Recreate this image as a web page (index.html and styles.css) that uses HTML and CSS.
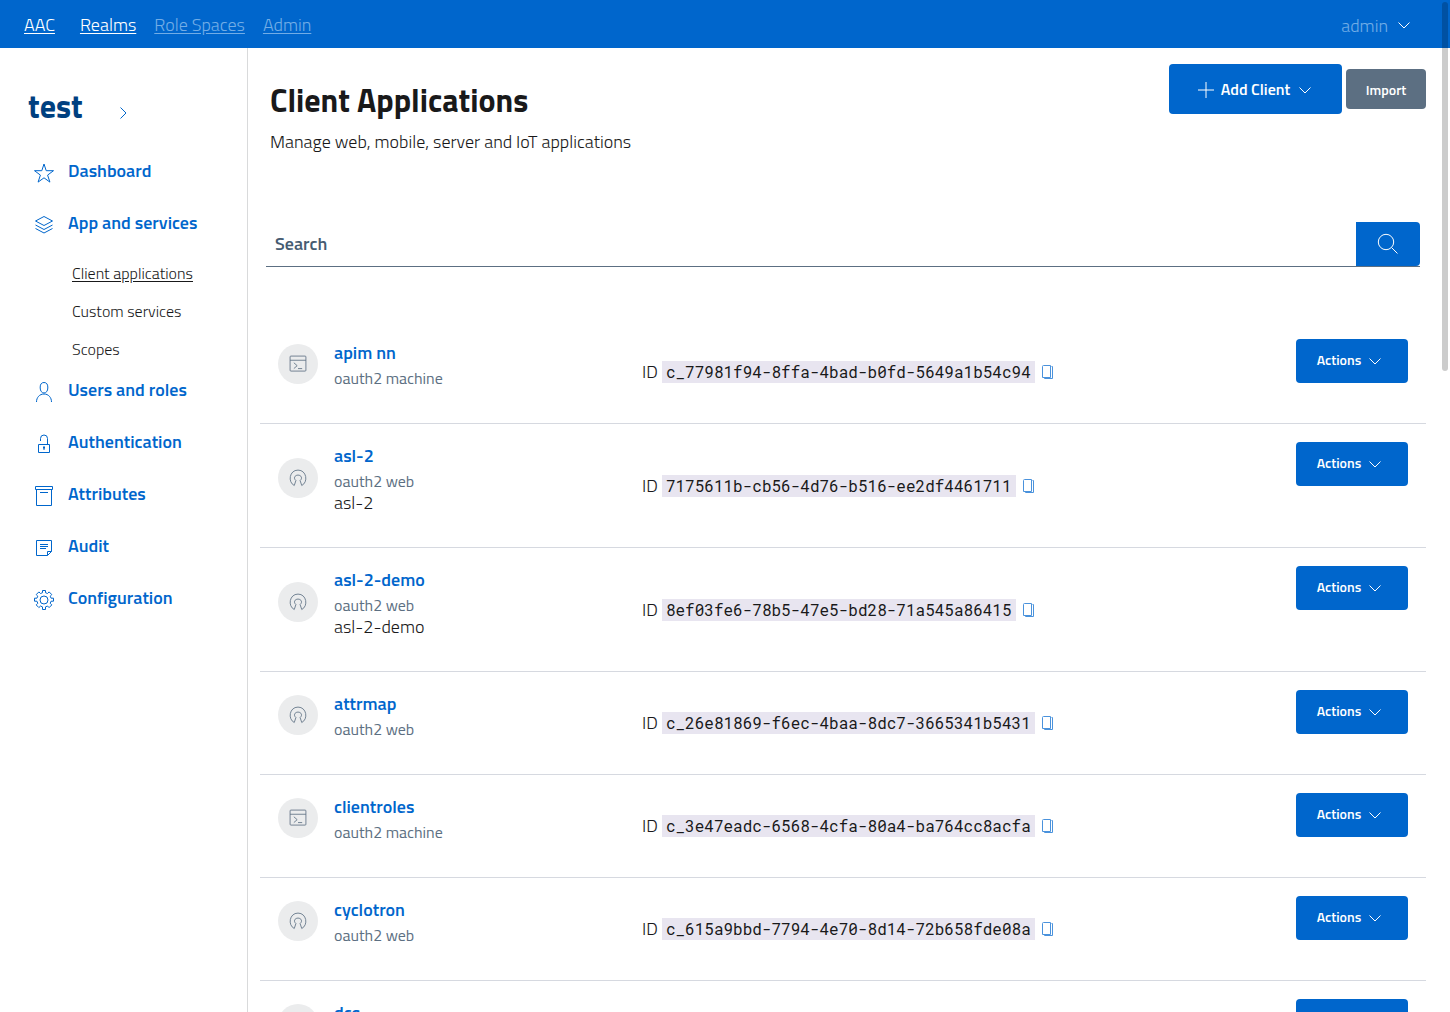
FILE: index.html
```html
<!DOCTYPE html>
<html lang="en">
<head>
<meta charset="utf-8">
<title>Client Applications</title>
<link rel="stylesheet" href="styles.css">
</head>
<body>
<svg class="sprite" aria-hidden="true">
  <symbol id="star" viewBox="0 0 24 24"><path d="M12 3l2.200 6.700H21.500l-5.900 4.400 2.300 7-5.900-4.300-5.900 4.300 2.300-7L2.500 9.700h7.300z"/></symbol>
  <symbol id="layers" viewBox="0 0 24 24"><path d="M12 3.500l8.500 4.500-8.500 4.500L3.500 8zM3.500 12l8.500 4.500 8.500-4.500M3.500 15.500L12 20l8.500-4.500"/></symbol>
  <symbol id="user" viewBox="0 0 24 24"><path d="M12 2.500c2.500 0 3.800 1.800 3.800 4.500v1c0 2.800-1.500 5-3.800 5s-3.800-2.200-3.800-5V7c0-2.700 1.300-4.500 3.800-4.500zM4.500 22c0-4.500 3-8 7.500-8s7.500 3.500 7.500 8"/></symbol>
  <symbol id="lock" viewBox="0 0 24 24"><path d="M6.500 12.500h11v8h-11zM8.500 9V6.500a3.500 3.500 0 0 1 7 0v6"/><path d="M11 14.500h2v2h-.5v1.500h-1v-1.500H11z" class="solid"/></symbol>
  <symbol id="box" viewBox="0 0 24 24"><path d="M3.500 2.500h17v3h-17zM4.500 5.500v16h15v-16M8 8.500h8"/></symbol>
  <symbol id="note" viewBox="0 0 24 24"><path d="M19.500 15.500v-11h-15v15h11l4-4h-4v4M8 8.500h8M8 10.500h8M8 12.500h6"/></symbol>
  <symbol id="gear" viewBox="0 0 24 24"><path d="M10.500 2.500h3v2.200l2 .8 1.600-1.600 2.700 2.700-1.600 1.600.9 2h2.400v3h-2.400l-.9 2.100 1.600 1.600-2.700 2.700-1.600-1.600-2 .9v2.600h-3v-2.600l-2-.9-1.600 1.600-2.700-2.700 1.600-1.600-.9-2.100H2.500v-3h2.400l.9-2-1.600-1.600 2.700-2.700 1.600 1.600 2-.8z"/><circle cx="12" cy="12" r="4"/></symbol>
  <symbol id="terminal" viewBox="0 0 24 24"><rect x="2.500" y="2.500" width="19" height="18" rx="1"/><path d="M2.500 7.500h19M7 10.500l4 3.500-4 3.500M12 17.500h5"/></symbol>
  <symbol id="opensource" viewBox="0 0 24 24"><path d="M9.500 15c-3.300-2.500-1.500-6.500 2.500-6.500s5.800 4 2.500 6.500l2 6c8-4 6-18.500-4.500-18.500S-.5 17 7.500 21z"/></symbol>
  <symbol id="down" viewBox="0 0 16 16"><path d="M2.500 5.500L8 11l5.500-5.500"/></symbol>
  <symbol id="right" viewBox="0 0 16 16"><path d="M5.500 2.500L11 8l-5.500 5.500"/></symbol>
  <symbol id="plus" viewBox="0 0 16 16"><path d="M8 0v16M0 8h16"/></symbol>
  <symbol id="search" viewBox="0 0 24 24"><circle cx="10" cy="10" r="7.700"/><path d="M15.500 15.500l6 6"/></symbol>
  <symbol id="copy" viewBox="0 0 14 16"><path d="M1.500 2.500a1 1 0 0 1 1-1h7v12h-8z"/><path d="M10.500 2.500h1v12h-8l-1-1"/></symbol>
</svg>

<header class="topbar">
  <nav class="topnav">
    <a class="brand" href="#">AAC</a>
    <a class="current" href="#">Realms</a>
    <a href="#">Role Spaces</a>
    <a href="#">Admin</a>
  </nav>
  <button class="account" type="button">admin <svg class="chevron"><use href="#down"/></svg></button>
</header>

<div class="page">
  <aside class="sidebar">
    <a class="realm" href="#"><span>test</span><svg class="chevron"><use href="#right"/></svg></a>
    <nav class="menu">
      <a class="item" href="#"><svg class="icon"><use href="#star"/></svg>Dashboard</a>
      <a class="item" href="#"><svg class="icon"><use href="#layers"/></svg>App and services</a>
      <div class="submenu">
        <a class="active" href="#">Client applications</a>
        <a href="#">Custom services</a>
        <a href="#">Scopes</a>
      </div>
      <a class="item" href="#"><svg class="icon"><use href="#user"/></svg>Users and roles</a>
      <a class="item" href="#"><svg class="icon"><use href="#lock"/></svg>Authentication</a>
      <a class="item" href="#"><svg class="icon"><use href="#box"/></svg>Attributes</a>
      <a class="item" href="#"><svg class="icon"><use href="#note"/></svg>Audit</a>
      <a class="item" href="#"><svg class="icon"><use href="#gear"/></svg>Configuration</a>
    </nav>
  </aside>

  <main class="content">
    <div class="heading">
      <div class="titles">
        <h1>Client Applications</h1>
        <p>Manage web, mobile, server and IoT applications</p>
      </div>
      <div class="tools">
        <button class="btn add" type="button"><svg class="chevron"><use href="#plus"/></svg>Add Client<svg class="chevron"><use href="#down"/></svg></button>
        <button class="btn import" type="button">Import</button>
      </div>
    </div>

    <form class="search">
      <label for="q">Search</label>
      <input id="q" type="search">
      <button type="button" aria-label="Search"><svg class="icon"><use href="#search"/></svg></button>
    </form>

    <ul class="clients">
      <li>
        <div class="client"><span class="avatar"><svg><use href="#terminal"/></svg></span><div class="info"><a href="#">apim nn</a><small>oauth2 machine</small></div></div>
        <div class="ident">ID <code>c_77981f94-8ffa-4bad-b0fd-5649a1b54c94</code><button class="copy" type="button" aria-label="Copy"><svg><use href="#copy"/></svg></button></div>
        <button class="btn actions" type="button">Actions<svg class="chevron"><use href="#down"/></svg></button>
      </li>
      <li>
        <div class="client"><span class="avatar"><svg><use href="#opensource"/></svg></span><div class="info"><a href="#">asl-2</a><small>oauth2 web</small><p>asl-2</p></div></div>
        <div class="ident">ID <code>7175611b-cb56-4d76-b516-ee2df4461711</code><button class="copy" type="button" aria-label="Copy"><svg><use href="#copy"/></svg></button></div>
        <button class="btn actions" type="button">Actions<svg class="chevron"><use href="#down"/></svg></button>
      </li>
      <li>
        <div class="client"><span class="avatar"><svg><use href="#opensource"/></svg></span><div class="info"><a href="#">asl-2-demo</a><small>oauth2 web</small><p>asl-2-demo</p></div></div>
        <div class="ident">ID <code>8ef03fe6-78b5-47e5-bd28-71a545a86415</code><button class="copy" type="button" aria-label="Copy"><svg><use href="#copy"/></svg></button></div>
        <button class="btn actions" type="button">Actions<svg class="chevron"><use href="#down"/></svg></button>
      </li>
      <li>
        <div class="client"><span class="avatar"><svg><use href="#opensource"/></svg></span><div class="info"><a href="#">attrmap</a><small>oauth2 web</small></div></div>
        <div class="ident">ID <code>c_26e81869-f6ec-4baa-8dc7-3665341b5431</code><button class="copy" type="button" aria-label="Copy"><svg><use href="#copy"/></svg></button></div>
        <button class="btn actions" type="button">Actions<svg class="chevron"><use href="#down"/></svg></button>
      </li>
      <li>
        <div class="client"><span class="avatar"><svg><use href="#terminal"/></svg></span><div class="info"><a href="#">clientroles</a><small>oauth2 machine</small></div></div>
        <div class="ident">ID <code>c_3e47eadc-6568-4cfa-80a4-ba764cc8acfa</code><button class="copy" type="button" aria-label="Copy"><svg><use href="#copy"/></svg></button></div>
        <button class="btn actions" type="button">Actions<svg class="chevron"><use href="#down"/></svg></button>
      </li>
      <li>
        <div class="client"><span class="avatar"><svg><use href="#opensource"/></svg></span><div class="info"><a href="#">cyclotron</a><small>oauth2 web</small></div></div>
        <div class="ident">ID <code>c_615a9bbd-7794-4e70-8d14-72b658fde08a</code><button class="copy" type="button" aria-label="Copy"><svg><use href="#copy"/></svg></button></div>
        <button class="btn actions" type="button">Actions<svg class="chevron"><use href="#down"/></svg></button>
      </li>
      <li>
        <div class="client"><span class="avatar"></span><div class="info"><a href="#">dcs</a></div></div>
        <div class="ident"></div>
        <button class="btn actions" type="button" aria-label="Actions"></button>
      </li>
    </ul>
  </main>
</div>
<div class="scroll-thumb"></div>
</body>
</html>
```
FILE: styles.css
```css
* { box-sizing: border-box; }

body {
  display: flex;
  flex-direction: column;
  height: 100vh;
  margin: 0;
  overflow: hidden;
  background: #fff;
  color: #19191a;
  font: 300 18px/24px "Titillium Web", Roboto, sans-serif;
}

h1, p, ul { margin: 0; padding: 0; }
a { color: #06c; text-decoration: none; }
svg { flex: none; fill: none; stroke: currentColor; }
button { font-family: inherit; cursor: pointer; }
.sprite { display: none; }
.solid { fill: currentColor; stroke: none; }
.icon { width: 24px; height: 24px; }
.chevron { width: 16px; height: 16px; }

.topbar {
  display: flex;
  flex: none;
  align-items: center;
  justify-content: space-between;
  height: 48px;
  padding: 2px 38px 0 24px;
  background: #06c;
}
.topnav { display: flex; gap: 18px; }
.topnav a { color: #72ade6; text-decoration: underline; text-underline-offset: 2px; }
.topnav .brand { margin-right: 7px; color: #fff; }
.topnav .current { color: #fff; }
.account {
  display: flex;
  align-items: center;
  gap: 8px;
  padding: 0;
  border: 0;
  background: none;
  color: #72ade6;
  font-size: 18px;
  font-weight: 300;
}
.account .chevron { color: #fff; }

.page { display: flex; flex: 1; min-height: 0; overflow-y: auto; scrollbar-width: none; }

.sidebar { flex: none; width: 248px; min-height: 100%; border-right: 1px solid #d9dadb; }
.realm {
  display: flex;
  align-items: center;
  gap: 32px;
  height: 97px;
  padding: 18px 28px 0;
  color: #004080;
  font-size: 32px;
  font-weight: 700;
  line-height: 40px;
}
.realm .chevron { margin-top: 14px; color: #06c; }
.item {
  display: flex;
  align-items: center;
  gap: 12px;
  height: 52px;
  padding-left: 32px;
  font-weight: 600;
}
.item .icon { margin-top: 4px; }
.submenu { display: flex; flex-direction: column; align-items: flex-start; gap: 14px; padding: 12px 0 3px 72px; }
.submenu a { color: #19191a; font-size: 16px; }
.submenu .active { text-decoration: underline; text-underline-offset: 2px; }

.content { flex: 1; min-width: 0; padding: 16px 24px 0 12px; }
.heading { display: flex; align-items: flex-start; justify-content: space-between; height: 158px; }
.titles { padding: 16px 0 0 10px; }
h1 { margin-bottom: 10px; font-size: 32px; font-weight: 700; line-height: 40px; }
.tools { display: flex; align-items: center; gap: 4px; }
.btn {
  display: flex;
  align-items: center;
  justify-content: center;
  border: 0;
  border-radius: 4px;
  background: #06c;
  color: #fff;
  font-size: 14px;
  font-weight: 600;
}
.add { gap: 7px; width: 173px; height: 50px; padding-bottom: 2px; font-size: 16px; }
.add .chevron { margin-top: 3px; }
.import { width: 80px; height: 40px; background: #5c6f82; }

.search { display: flex; align-items: center; height: 45px; margin: 0 6px; border-bottom: 1px solid #5c6f82; }
.search label { padding: 0 9px; color: #455b71; font-weight: 600; }
.search input { flex: 1; min-width: 0; height: 44px; border: 0; outline: 0; font: inherit; }
.search button {
  display: flex;
  align-items: center;
  justify-content: center;
  width: 64px;
  height: 44px;
  padding: 0;
  border: 0;
  border-radius: 0 4px 4px 0;
  background: #06c;
  color: #fff;
}

.clients { margin-top: 54px; list-style: none; }
.clients li {
  display: grid;
  grid-template-columns: 364fr 654fr 112px;
  align-items: center;
  padding: 18px 18px 34px;
  border-bottom: 1px solid #d6d9e0;
}
.client { display: flex; align-items: center; gap: 16px; min-height: 50px; }
.avatar {
  display: flex;
  flex: none;
  align-items: center;
  justify-content: center;
  width: 40px;
  height: 40px;
  border-radius: 50%;
  background: #ebeced;
  color: #5c6f82;
}
.avatar svg { width: 20px; height: 20px; }
.info { display: flex; flex-direction: column; align-self: flex-start; }
.info a { font-weight: 600; line-height: 28px; }
.info small { color: #5c6f82; font-size: 16px; font-weight: 400; line-height: 22px; }
.info p { line-height: 21px; }
.ident { display: flex; align-items: center; gap: 4px; padding-top: 16px; }
code { padding: 0 4px; background: #e8e5f0; font: 400 16px/22px "Roboto Mono", "Liberation Mono", monospace; }
.copy { padding: 0 2px; border: 0; background: none; color: #4a92dc; line-height: 0; }
.copy svg { width: 14px; height: 16px; }
.actions { gap: 6px; align-self: start; height: 44px; padding: 0 8px 4px 4px; }
.actions .chevron { margin-top: 4px; }

.scroll-thumb {
  position: fixed;
  top: 2px;
  right: 2px;
  width: 6px;
  height: 369px;
  border-radius: 3px;
  background: rgba(0, 0, 0, .2);
}
```
